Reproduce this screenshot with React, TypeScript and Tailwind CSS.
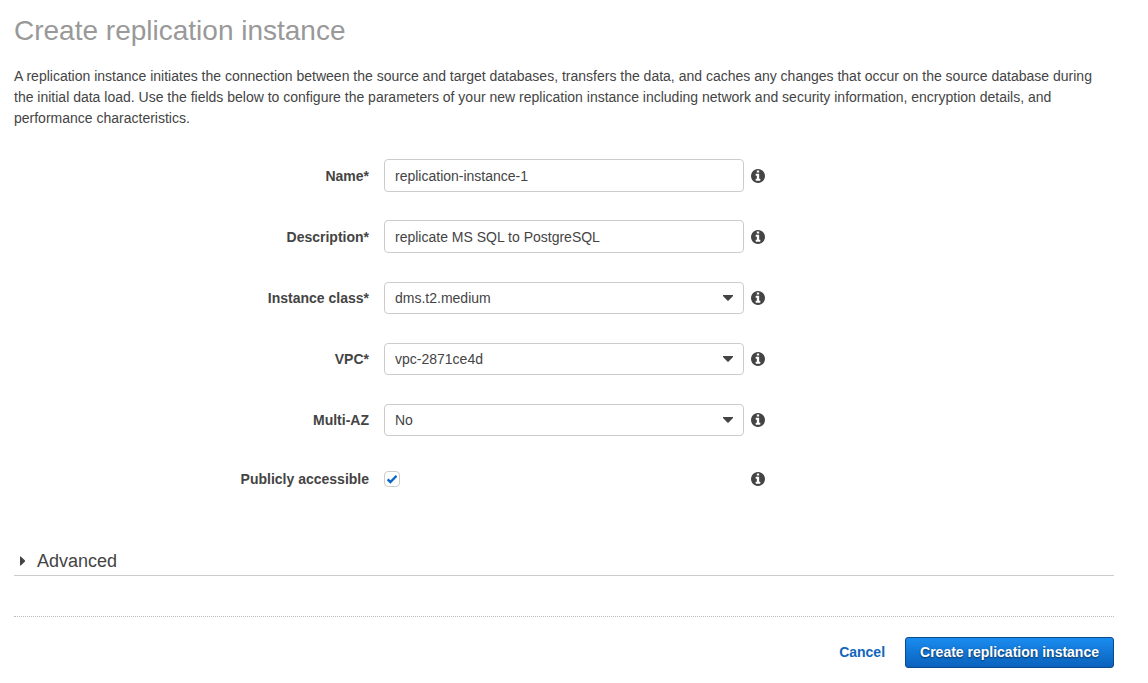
import { useState } from "react";
import type { ReactNode } from "react";

const InfoIcon = () => {
    return (
        <svg viewBox="0 128 1536 1536" className="size-3.5" fill="currentColor">
            <path d="M1024 1376v-160q0-14-9-23t-23-9h-96v-512q0-14-9-23t-23-9h-320q-14 0-23 9t-9 23v160q0 14 9 23t23 9h96v320h-96q-14 0-23 9t-9 23v160q0 14 9 23t23 9h448q14 0 23-9t9-23zm-128-896v-160q0-14-9-23t-23-9h-192q-14 0-23 9t-9 23v160q0 14 9 23t23 9h192q14 0 23-9t9-23zm640 416q0 209-103 385.5t-279.5 279.5-385.5 103-385.5-103-279.5-279.5-103-385.5 103-385.5 279.5-279.5 385.5-103 385.5 103 279.5 279.5 103 385.5z" />
        </svg>
    );
};

const FieldRow = ({ id, label, children }: { id: string; label: string; children: ReactNode }) => {
    return (
        <div className="flex min-h-[30px] items-center">
            <label htmlFor={id} className="w-[355px] shrink-0 text-right font-bold">
                {label}
            </label>
            <div className="ml-[15px] flex w-[360px] items-center">{children}</div>
            <button type="button" aria-label={`About ${label}`} className="ml-[7px] cursor-pointer">
                <InfoIcon />
            </button>
        </div>
    );
};

const TextField = ({ id, value }: { id: string; value: string }) => {
    return (
        <input
            id={id}
            type="text"
            defaultValue={value}
            className="h-[33px] w-full rounded border border-[#ccc] bg-white px-2.5 outline-none focus:border-[#1166bb]"
        />
    );
};

const SelectField = ({ id, options }: { id: string; options: string[] }) => {
    return (
        <div className="grid h-[33px] w-full items-center">
            <select
                id={id}
                className="col-start-1 row-start-1 h-8 w-full appearance-none rounded border border-[#ccc] bg-white px-2.5 outline-none focus:border-[#1166bb]"
            >
                {options.map((option) => (
                    <option key={option}>{option}</option>
                ))}
            </select>
            <svg viewBox="0 0 10 6" className="pointer-events-none col-start-1 row-start-1 mr-[11px] h-1.5 w-2.5 justify-self-end" fill="currentColor">
                <path d="M0 0h10v1L5.6 5.6a.8.8 0 0 1-1.2 0L0 1z" />
            </svg>
        </div>
    );
};

const App = () => {
    const [open, setOpen] = useState(false);

    return (
        <main className="bg-white pt-[13px] pr-[34px] pb-4 pl-3.5 font-['Liberation_Sans',Arial,sans-serif] text-sm text-[#444]">
            <h1 className="text-[28px] leading-9 text-[#999]">Create replication instance</h1>
            <p className="mt-[17px] leading-[21px]">
                A replication instance initiates the connection between the source and target databases, transfers the data, and caches any changes that occur on the source database during the initial data load. Use the fields below to configure the parameters of your new replication instance including network and security information, encryption details, and performance characteristics.
            </p>

            <form onSubmit={(e) => e.preventDefault()}>
                <div className="mt-[30px] flex flex-col gap-7">
                    <FieldRow id="name" label="Name*">
                        <TextField id="name" value="replication-instance-1" />
                    </FieldRow>
                    <FieldRow id="description" label="Description*">
                        <TextField id="description" value="replicate MS SQL to PostgreSQL" />
                    </FieldRow>
                    <FieldRow id="instance-class" label="Instance class*">
                        <SelectField id="instance-class" options={["dms.t2.medium", "dms.t2.large"]} />
                    </FieldRow>
                    <FieldRow id="vpc" label="VPC*">
                        <SelectField id="vpc" options={["vpc-2871ce4d"]} />
                    </FieldRow>
                    <FieldRow id="multi-az" label="Multi-AZ">
                        <SelectField id="multi-az" options={["No", "Yes"]} />
                    </FieldRow>
                    <FieldRow id="public" label="Publicly accessible">
                        <div className="grid place-items-center">
                            <input
                                id="public"
                                type="checkbox"
                                defaultChecked
                                className="peer col-start-1 row-start-1 size-4 appearance-none rounded border border-[#ccc] bg-white"
                            />
                            <svg viewBox="0 0 10 10" className="pointer-events-none invisible col-start-1 row-start-1 size-2.5 peer-checked:visible" fill="none" stroke="#0a66c8" strokeWidth="2.4">
                                <path d="M.6 5.4 3.4 8 9.6 1.8" />
                            </svg>
                        </div>
                    </FieldRow>
                </div>

                <div className="mt-13 border-b border-[#ccc]">
                    <button
                        type="button"
                        aria-expanded={open}
                        onClick={() => setOpen(!open)}
                        className="flex h-[29px] cursor-pointer items-center gap-3 pl-1.5 text-lg"
                    >
                        <svg viewBox="0 0 5 10" className="h-2.5 w-[5px]" fill="currentColor">
                            <path d="M0 .5h.8L5 4.4v1.2L.8 9.5H0z" />
                        </svg>
                        Advanced
                    </button>
                </div>

                <div className="mt-10 flex items-center justify-end gap-5 border-t border-dotted border-[#bbb] pt-5">
                    <a href="#" className="pb-0.5 font-bold text-[#1166bb]">Cancel</a>
                    <button
                        type="submit"
                        className="h-[31px] cursor-pointer rounded-[3px] border border-[#0a4a8a] bg-linear-to-b from-[#1a8cf0] to-[#0a62bd] px-3.5 pb-0.5 font-bold text-white text-shadow-[0_1px_2px_rgb(0_0_0/0.6)]"
                    >
                        Create replication instance
                    </button>
                </div>
            </form>
        </main>
    );
};

export default App;
